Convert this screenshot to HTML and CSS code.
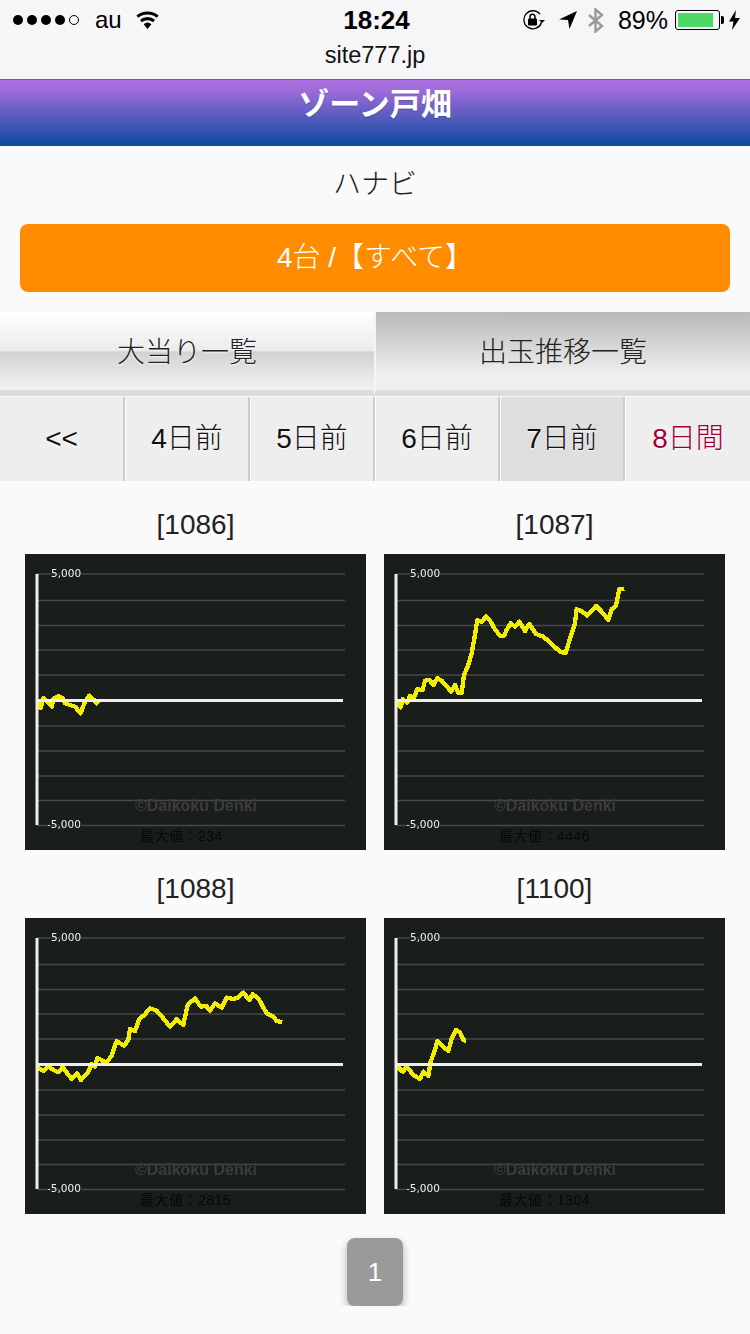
FILE: index.html
```html
<!DOCTYPE html>
<html lang="ja">
<head>
  <meta charset="UTF-8">
  <meta name="viewport" content="width=device-width, initial-scale=1.0">
  <title>ゾーン戸畑</title>
  <link rel="stylesheet" href="styles.css">
</head>
<body>
  <div class="browser-bar">
    <div class="status">
      <div class="status-left">
        <span class="signal"><i></i><i></i><i></i><i></i><i class="off"></i></span>
        <span class="carrier">au</span>
        <svg class="wifi" width="25" height="18" viewBox="0 0 25 18"><path d="M12.5 18 8.6 13.2a6 6 0 0 1 7.8 0z"/><path d="M6.9 11.2 5 8.8a11.8 11.8 0 0 1 15 0l-1.900 2.400a8.800 8.800 0 0 0-11.200 0z"/><path d="M3.300 6.800 1.400 4.400a17.500 17.500 0 0 1 22.200 0l-1.900 2.400a14.500 14.500 0 0 0-18.400 0z"/></svg>
      </div>
      <div class="time">18:24</div>
      <div class="status-right">
        <svg class="lock" width="24" height="20" viewBox="0 0 24 20"><path d="M19.500 12.500A9 9 0 1 1 18 4.200" fill="none" stroke="#000" stroke-width="1.300"/><path d="M17 10h6l-3 3z"/><rect x="6" y="8.500" width="9" height="7" rx="1"/><path d="M8 9V6.800a2.500 2.500 0 0 1 5 0V9" fill="none" stroke="#000" stroke-width="1.500"/></svg>
        <svg class="arrow" width="18" height="18" viewBox="0 0 18 18"><path d="M18 0 0 8.500l9 .6 1.500 8.900z"/></svg>
        <svg class="bt" width="16" height="25" viewBox="0 0 16 25"><path d="M1 7l13 11-6.500 5.500V1.500L14 7 1 18" fill="none" stroke="#999" stroke-width="2.400"/></svg>
        <span class="percent">89%</span>
        <span class="battery"><span class="battery-fill"></span></span>
        <svg class="bolt" width="11" height="20" viewBox="0 0 11 20"><path d="M7 0 0 11.500h4.500L3 20l8-12H6z"/></svg>
      </div>
    </div>
    <div class="url">site777.jp</div>
  </div>

  <h1 class="shop">ゾーン戸畑</h1>
  <p class="machine">ハナビ</p>
  <a class="filter-btn">4台 /【すべて】</a>

  <div class="tabs">
    <a class="tab">大当り一覧</a>
    <a class="tab tab-active">出玉推移一覧</a>
  </div>

  <div class="days">
    <a class="day day-back">&lt;&lt;</a>
    <a class="day">4日前</a>
    <a class="day">5日前</a>
    <a class="day">6日前</a>
    <a class="day day-current">7日前</a>
    <a class="day day-total">8日間</a>
  </div>

  <svg class="defs" width="0" height="0">
    <defs>
      <path id="grid" class="grid-line" d="M12 20H320M12 46.500H320M12 71.500H320M12 96H320M12 121H320M12 172H320M12 197H320M12 222H320M12 246.500H320M12 271.500H320"/>
      <path id="axis" class="axis" d="M12 20V271M12 146.500H318"/>
    </defs>
  </svg>

  <div class="machines">
    <div class="unit">
      <div class="unit-no">[1086]</div>
      <svg class="chart" viewBox="0 0 341 296">
        <use href="#grid"/>
        <polyline class="series" transform="translate(-5 -4) scale(.3333)" points="52,455 62,474 70,445 80,452 85,458 95,470 100,447 115,438 128,445 135,460 150,465 165,470 182,490 195,455 208,437 222,450 235,463"/>
        <use href="#axis"/>
        <text class="scale" x="26" y="23">5,000</text>
        <text class="scale" x="22" y="274">-5,000</text>
        <text class="mark" x="110" y="257">©Daikoku Denki</text>
        <text class="max" x="115" y="287">最大値：234</text>
      </svg>
    </div>
    <div class="unit">
      <div class="unit-no">[1087]</div>
      <svg class="chart" viewBox="0 0 341 296">
        <use href="#grid"/>
        <polyline class="series" transform="translate(-4 -4) scale(.3333)" points="50,455 62,472 68,448 82,458 90,438 102,442 112,418 128,420 135,392 148,390 160,405 172,385 185,392 200,408 213,425 225,405 235,430 245,430 252,375 265,345 275,310 285,255 292,210 305,215 318,200 330,212 345,238 360,257 372,258 380,240 392,220 405,230 418,215 435,243 448,222 468,252 490,260 515,282 540,305 557,310 570,265 585,220 590,178 605,183 622,197 648,168 665,185 685,210 695,178 708,168 718,118 733,116"/>
        <use href="#axis"/>
        <text class="scale" x="26" y="23">5,000</text>
        <text class="scale" x="22" y="274">-5,000</text>
        <text class="mark" x="110" y="257">©Daikoku Denki</text>
        <text class="max" x="115" y="287">最大値：4446</text>
      </svg>
    </div>
    <div class="unit">
      <div class="unit-no">[1088]</div>
      <svg class="chart" viewBox="0 0 341 296">
        <use href="#grid"/>
        <polyline class="series" transform="translate(-5 -3) scale(.3333)" points="52,458 70,468 85,455 100,465 115,472 128,457 155,492 172,475 183,495 205,470 215,448 225,455 232,430 245,435 258,445 275,422 290,378 312,392 325,375 330,342 345,348 358,312 375,298 390,280 410,287 430,310 450,335 470,313 490,330 503,270 525,250 542,275 558,272 570,287 585,265 605,278 620,248 640,252 655,247 670,233 688,255 698,238 715,250 740,295 760,305 770,318 787,322"/>
        <use href="#axis"/>
        <text class="scale" x="26" y="23">5,000</text>
        <text class="scale" x="22" y="274">-5,000</text>
        <text class="mark" x="110" y="257">©Daikoku Denki</text>
        <text class="max" x="115" y="287">最大値：2815</text>
      </svg>
    </div>
    <div class="unit">
      <div class="unit-no">[1100]</div>
      <svg class="chart" viewBox="0 0 341 296">
        <use href="#grid"/>
        <polyline class="series" transform="translate(-4 -3) scale(.3333)" points="50,452 68,470 80,455 100,480 120,492 130,470 145,483 152,440 165,405 172,378 190,395 205,408 215,370 228,345 240,352 250,375 258,377"/>
        <use href="#axis"/>
        <text class="scale" x="26" y="23">5,000</text>
        <text class="scale" x="22" y="274">-5,000</text>
        <text class="mark" x="110" y="257">©Daikoku Denki</text>
        <text class="max" x="115" y="287">最大値：1304</text>
      </svg>
    </div>
  </div>

  <div class="pager"><a class="page">1</a></div>
</body>
</html>
```
FILE: styles.css
```css
body {
  font-family: "Liberation Sans", "Noto Sans CJK JP", sans-serif;
  background-color: #fafafa;
  color: #222;
  margin: 0;
}
.browser-bar {
  background-color: #f6f6f8;
  height: 79px;
  color: #000;
}
.status {
  display: grid;
  grid-template-columns: 1fr auto 1fr;
  align-items: center;
  height: 40px;
  padding: 0 10px 0 13px;
}
.status-left {
  display: flex;
  align-items: center;
}
.signal {
  display: flex;
  gap: 4px;
}
.signal i {
  width: 10px;
  height: 10px;
  border-radius: 50%;
  background: #000;
  box-sizing: border-box;
}
.signal i.off {
  background: none;
  border: 1px solid #000;
}
.carrier {
  font-size: 24px;
  margin-left: 16px;
}
.wifi {
  margin-left: 13px;
}
.time {
  font-size: 26px;
  font-weight: bold;
}
.status-right {
  display: flex;
  align-items: center;
  justify-content: flex-end;
  gap: 11px;
}
.lock {
  margin-right: 2px;
}
.percent {
  font-size: 25px;
  margin-left: 3px;
  margin-right: -4px;
}
.battery {
  position: relative;
  width: 45px;
  height: 20px;
  border: 1px solid #000;
  border-radius: 3px;
  box-sizing: border-box;
  padding: 2px;
}
.battery::after {
  content: "";
  position: absolute;
  right: -5px;
  top: 5px;
  width: 3px;
  height: 8px;
  background: #000;
  border-radius: 0 2px 2px 0;
}
.battery-fill {
  display: block;
  height: 100%;
  width: 89%;
  background: #4cd964;
}
.bolt {
  margin-left: -2px;
}
.url {
  font-size: 23.5px;
  text-align: center;
  line-height: 30px;
  color: #111;
}
.shop {
  margin: 0;
  height: 67px;
  box-sizing: border-box;
  border-top: 1px solid #7a5a90;
  background: linear-gradient(#a970e0, #a46ddc 12%, #0a4a9e);
  color: #fff;
  font-size: 31px;
  line-height: 50px;
  text-align: center;
  text-shadow: 0 1px 1px rgba(0,0,0,0.2);
}
.machine {
  margin: 0;
  padding-top: 18px;
  font-size: 28px;
  font-weight: 300;
  line-height: 42px;
  text-align: center;
}
.filter-btn {
  display: block;
  margin: 18px 20px 20px;
  height: 68px;
  line-height: 68px;
  background-color: #ff8c00;
  border-radius: 8px;
  color: #fff;
  font-size: 28px;
  font-weight: 300;
  text-align: center;
}
.tabs {
  display: flex;
  height: 84px;
  border-bottom: 1px solid #fafafa;
}
.tab {
  flex: 1;
  height: 78px;
  line-height: 82px;
  border-bottom: 6px solid #ddd;
  text-align: center;
  font-size: 28px;
  font-weight: 300;
  color: #222;
  text-shadow: 0 1px 2px #fff;
  background: linear-gradient(#fff, #ebebeb 50%, #d2d2d2 51%, #f2f2f2);
}
.tab-active {
  border-left: 2px solid #f4f4f4;
  background: linear-gradient(#b9b9b9, #efefef 80%);
  text-shadow: none;
}
.days {
  display: grid;
  grid-template-columns: repeat(6, 125px);
  height: 81px;
  border-bottom: 2px solid #ddd;
}
.day {
  box-sizing: border-box;
  background: #eee;
  border-right: 2px solid #ccc;
  border-left: 1px solid #fff;
  line-height: 84px;
  text-align: center;
  font-size: 28px;
  font-weight: 300;
  color: #111;
  text-shadow: 0 1px 2px #fff;
}
.day-back {
  border-left: none;
}
.day-current {
  background: #dedede;
}
.day-total {
  color: #a00038;
  border-right: none;
}
.defs {
  position: absolute;
}
.machines {
  display: grid;
  grid-template-columns: 359px 359px;
  grid-auto-rows: 364px;
  padding: 24px 16px 0;
}
.unit {
  text-align: center;
}
.unit-no {
  font-size: 28px;
  font-weight: 300;
  line-height: 42px;
  height: 50px;
}
.chart {
  display: block;
  width: 341px;
  height: 296px;
  margin: 0 auto;
  background: #1a1e1b;
  filter: blur(0.3px);
}
.grid-line {
  stroke: #474747;
  stroke-width: 1.500;
  fill: none;
}
.axis {
  stroke: #eee;
  stroke-width: 3;
  fill: none;
}
.series {
  fill: none;
  stroke: #f2ee00;
  stroke-width: 13;
  stroke-linejoin: round;
  shape-rendering: crispEdges;
}
.scale {
  font-family: "DejaVu Sans", sans-serif;
  font-size: 10.500px;
  fill: #f2f2f2;
  paint-order: stroke;
  stroke: #1a1e1b;
  stroke-width: 2px;
}
.mark {
  font-size: 16px;
  font-weight: bold;
  fill: #3c3c40;
}
.max {
  font-size: 14px;
  letter-spacing: 0.5px;
  fill: #080808;
}
.pager {
  display: flex;
  justify-content: center;
  margin-top: 6px;
}
.page {
  width: 56px;
  height: 68px;
  line-height: 68px;
  background: #9a9a9a;
  border-radius: 8px;
  box-shadow: 0 4px 8px rgba(0,0,0,0.3);
  color: #fff;
  font-size: 26px;
  text-align: center;
}
```
